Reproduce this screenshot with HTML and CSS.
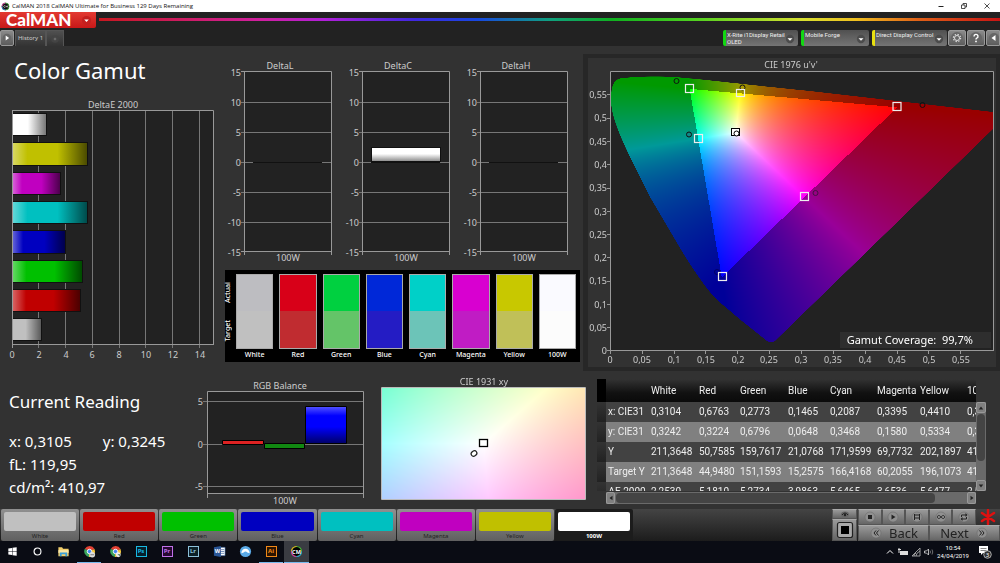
FILE: index.html
```html
<!DOCTYPE html>
<html lang="en">
<head>
<meta charset="utf-8">
<title>CalMAN 2018 CalMAN Ultimate for Business</title>
<link rel="stylesheet" href="styles.css">
</head>
<body>
<header class="titlebar">
  <svg class="app-icon" viewBox="0 0 10 10"><circle cx="5" cy="5" r="3.9" fill="#111" stroke="#4a4" stroke-width="1"/><path d="M1.1 5a3.9 3.9 0 0 1 3.9-3.9" stroke="#d3a" fill="none"/><path d="M1.1 5a3.9 3.9 0 0 0 3.9 3.9" stroke="#36c" fill="none"/><path d="M4.6 4.2a1 1 0 1 0 0 1.6M5.6 6V4.2l.8 1 .8-1V6" stroke="#fff" stroke-width=".6" fill="none"/></svg>
  <span class="window-title">CalMAN 2018 CalMAN Ultimate for Business 129 Days Remaining</span>
  <div class="window-buttons">
    <button aria-label="Minimize"><svg viewBox="0 0 10 10"><path d="M2.5 5.5h5" stroke="#222"/></svg></button>
    <button aria-label="Restore"><svg viewBox="0 0 10 10"><path d="M2.5 4h3.500v3.500h-3.500zM4 4V2.500h3.500V6H6" fill="none" stroke="#222" stroke-width=".8"/></svg></button>
    <button aria-label="Close"><svg viewBox="0 0 10 10"><path d="M2.500 2.500l5 5M7.500 2.500l-5 5" stroke="#222" stroke-width=".8"/></svg></button>
  </div>
</header>

<div class="brandbar">
  <button class="brand">CalMAN<svg viewBox="0 0 12 12"><circle cx="6" cy="6" r="5" fill="#c4201f"/><path d="M3.500 5h5L6 7.500z" fill="#fff"/></svg></button>
  <div class="rainbow"></div>
</div>

<nav class="toolbar">
  <button class="play" aria-label="Expand"><svg viewBox="0 0 14 14"><circle cx="7" cy="7" r="5" fill="#666"/><path d="M5.500 4v6l4-3z" fill="#fff"/></svg></button>
  <button class="tab">History 1</button>
  <button class="tab add" aria-label="Add tab"><svg viewBox="0 0 14 14"><circle cx="7" cy="7" r="4.500" fill="#444"/><path d="M7 5.500v3M5.500 7h3" stroke="#888" stroke-width=".8"/></svg></button>
  <div class="devices">
    <button class="device meter"><span>X-Rite i1Display Retail<br>OLED</span><svg viewBox="0 0 12 12"><circle cx="6" cy="6" r="5" fill="#4c4c4c"/><path d="M3 5h6L6 8z" fill="#fff"/></svg></button>
    <button class="device source"><span>Mobile Forge</span><svg viewBox="0 0 12 12"><circle cx="6" cy="6" r="5" fill="#4c4c4c"/><path d="M3 5h6L6 8z" fill="#fff"/></svg></button>
    <button class="device display"><span>Direct Display Control</span><svg viewBox="0 0 12 12"><circle cx="6" cy="6" r="5" fill="#4c4c4c"/><path d="M3 5h6L6 8z" fill="#fff"/></svg></button>
    <button class="tool" aria-label="Settings"><svg viewBox="0 0 14 14"><circle cx="7" cy="7" r="6" fill="#666"/><circle cx="7" cy="7" r="2.500" fill="none" stroke="#ddd" stroke-width="1"/><circle cx="7" cy="7" r="3.600" fill="none" stroke="#ddd" stroke-width="1.200" stroke-dasharray="1.400 1.430"/></svg></button>
    <button class="tool" aria-label="Help"><svg viewBox="0 0 14 14"><circle cx="7" cy="7" r="6" fill="#666"/><path d="M5 5.400a2 2 0 1 1 2.800 1.800Q7 7.600 7 8.500" fill="none" stroke="#fff" stroke-width="1.400"/><circle cx="7" cy="10.400" r=".9" fill="#fff"/></svg></button>
    <button class="tool edge" aria-label="Collapse"><svg viewBox="0 0 14 14"><circle cx="7" cy="7" r="5" fill="#666"/><path d="M8.500 4v6l-4-3z" fill="#fff"/></svg></button>
  </div>
</nav>

<main>
  <div class="row top">
    <section class="gamut">
      <h1>Color Gamut</h1>
      <svg class="chart" viewBox="0 98 220 267" role="img" aria-label="DeltaE 2000">
        <defs>
          <linearGradient id="shade"><stop offset="0" stop-color="#fff" stop-opacity=".4"/><stop offset=".2" stop-color="#fff" stop-opacity="0"/><stop offset=".6" stop-color="#000" stop-opacity="0"/><stop offset="1" stop-color="#000" stop-opacity=".62"/></linearGradient>
          <linearGradient id="soft"><stop offset=".45" stop-color="#000" stop-opacity="0"/><stop offset="1" stop-color="#000" stop-opacity=".55"/></linearGradient>
        </defs>
        <rect x="12" y="110" width="201" height="235" fill="#222"/>
        <path class="grid" d="M38.500 110V348M65.500 110V348M92.500 110V348M119.500 110V348M145.500 110V348M172.500 110V348M199.500 110V348"/>
        <path class="frame" d="M12.500 348V110.500H213.500V345M12 344.500H213.500"/>
        <g stroke="#111">
          <path d="M12.500 113.500h34v22h-34z" fill="#fff"/><path d="M12.500 113.500h34v22h-34z" fill="url(#soft)"/>
          <path d="M12.500 142.500h75v23h-75z" fill="#c0c000"/><path d="M12.500 142.500h75v23h-75z" fill="url(#shade)"/>
          <path d="M12.500 172.500h48v22h-48z" fill="#c000c0"/><path d="M12.500 172.500h48v22h-48z" fill="url(#shade)"/>
          <path d="M12.500 201.500h75v22h-75z" fill="#00c0c0"/><path d="M12.500 201.500h75v22h-75z" fill="url(#shade)"/>
          <path d="M12.500 230.500h53v23h-53z" fill="#0000c0"/><path d="M12.500 230.500h53v23h-53z" fill="url(#shade)"/>
          <path d="M12.500 260.500h70v22h-70z" fill="#00c000"/><path d="M12.500 260.500h70v22h-70z" fill="url(#shade)"/>
          <path d="M12.500 289.500h68v22h-68z" fill="#c00000"/><path d="M12.500 289.500h68v22h-68z" fill="url(#shade)"/>
          <path d="M12.500 318.500h29v22h-29z" fill="#c0c0c0"/><path d="M12.500 318.500h29v22h-29z" fill="url(#soft)"/>
        </g>
        <path class="frame" d="M12.500 110V348"/>
        <g class="label mid"><text x="113" y="108">DeltaE 2000</text>
          <text x="12" y="358">0</text><text x="39" y="358">2</text><text x="66" y="358">4</text><text x="92" y="358">6</text><text x="119" y="358">8</text><text x="146" y="358">10</text><text x="173" y="358">12</text><text x="200" y="358">14</text></g>
      </svg>
    </section>

    <section class="deltas">
      <svg class="chart" viewBox="220 46 363 224" role="img" aria-label="DeltaL, DeltaC and DeltaH">
        <defs>
          <linearGradient id="whitebar" x2="0" y2="1"><stop offset=".45" stop-color="#fff"/><stop offset="1" stop-color="#888"/></linearGradient>
          <g id="deltaplot">
            <rect x="245" y="72" width="87" height="180" fill="#222"/>
            <path class="grid" d="M241 102.500h90M241 132.500h90M241 162.500h90M241 192.500h90M241 222.500h90"/>
            <path class="frame" d="M241 71.500H331.500V255M244.500 71V255M241 251.500H331"/>
            <g class="label end"><text x="241" y="76">15</text><text x="241" y="106">10</text><text x="241" y="136">5</text><text x="241" y="166">0</text><text x="241" y="196">-5</text><text x="241" y="226">-10</text><text x="241" y="256">-15</text></g>
            <text class="label mid" x="288" y="261">100W</text>
            <path d="M253 162.500h69" stroke="#111"/>
          </g>
        </defs>
        <use href="#deltaplot"/><use href="#deltaplot" x="118"/><use href="#deltaplot" x="236"/>
        <rect x="371.500" y="147.500" width="69" height="14" fill="url(#whitebar)" stroke="#111"/>
        <g class="label mid"><text x="280" y="69">DeltaL</text><text x="398" y="69">DeltaC</text><text x="516" y="69">DeltaH</text></g>
      </svg>
      <div class="swatches">
        <div class="sides"><span>Actual</span><span>Target</span></div>
        <figure><div class="pair white"></div><figcaption>White</figcaption></figure>
        <figure><div class="pair red"></div><figcaption>Red</figcaption></figure>
        <figure><div class="pair green"></div><figcaption>Green</figcaption></figure>
        <figure><div class="pair blue"></div><figcaption>Blue</figcaption></figure>
        <figure><div class="pair cyan"></div><figcaption>Cyan</figcaption></figure>
        <figure><div class="pair magenta"></div><figcaption>Magenta</figcaption></figure>
        <figure><div class="pair yellow"></div><figcaption>Yellow</figcaption></figure>
        <figure><div class="pair full"></div><figcaption>100W</figcaption></figure>
      </div>
    </section>

    <section class="cie">
      <svg class="chart" viewBox="583 46 417 325" role="img" aria-label="CIE 1976 u'v'">
        <rect x="583" y="54" width="417" height="317" fill="#272727"/>
        <rect x="588" y="58" width="408" height="309" fill="#323232"/>
        <rect x="610" y="71" width="383" height="280" fill="#222"/>
        <foreignObject x="610" y="71" width="383" height="280"><canvas id="locus" class="field" width="1149" height="840"></canvas></foreignObject>
        <path class="frame" d="M610.500 354V71.500H993.500V351M607 350.500H993.500"/>
        <path class="frame" d="M607 94.500h3M607 118.500h3M607 141.500h3M607 164.500h3M607 188.500h3M607 211.500h3M607 234.500h3M607 257.500h3M607 281.500h3M607 304.500h3M607 327.500h3M642.500 351v3M674.500 351v3M705.500 351v3M737.500 351v3M769.500 351v3M801.500 351v3M833.500 351v3M865.500 351v3M897.500 351v3M928.500 351v3M960.500 351v3"/>
        <g fill="none" stroke="#111"><circle cx="676.500" cy="81" r="2.500"/><circle cx="742.500" cy="87.500" r="2.500" fill="#a90"/><circle cx="922.500" cy="105" r="2.500"/><circle cx="689" cy="134.500" r="2.500" fill="#188"/><circle cx="815.500" cy="193" r="2.500" stroke="#414"/><circle cx="717" cy="272" r="2.500" stroke="#006"/></g>
        <g fill="none" stroke="#eee" stroke-width="1.200"><rect x="685.500" y="84.500" width="8" height="8"/><rect x="736.500" y="89.500" width="8" height="7"/><rect x="893" y="102.500" width="8" height="8"/><rect x="694.500" y="134.500" width="8" height="8"/><rect x="800.500" y="192.500" width="8" height="8"/><rect x="718.500" y="272.500" width="8" height="8"/></g>
        <rect x="731.500" y="128.500" width="8" height="7" fill="#fff" stroke="#000"/><circle cx="736.500" cy="133.500" r="2.500" fill="#fff" stroke="#000"/>
        <rect x="840" y="332" width="151" height="16" fill="#2e2e2e"/>
        <text class="coverage" x="973" y="344">Gamut Coverage:&#160; 99,7%</text>
        <text class="label mid" x="791" y="68">CIE 1976 u'v'</text>
        <g class="label end"><text x="607" y="98">0,55</text><text x="607" y="121">0,5</text><text x="607" y="145">0,45</text><text x="607" y="168">0,4</text><text x="607" y="191">0,35</text><text x="607" y="215">0,3</text><text x="607" y="238">0,25</text><text x="607" y="261">0,2</text><text x="607" y="284">0,15</text><text x="607" y="308">0,1</text><text x="607" y="331">0,05</text><text x="607" y="354">0</text></g>
        <g class="label mid"><text x="610" y="363">0</text><text x="642" y="363">0,05</text><text x="674" y="363">0,1</text><text x="706" y="363">0,15</text><text x="738" y="363">0,2</text><text x="769" y="363">0,25</text><text x="801" y="363">0,3</text><text x="833" y="363">0,35</text><text x="865" y="363">0,4</text><text x="897" y="363">0,45</text><text x="929" y="363">0,5</text><text x="961" y="363">0,55</text></g>
      </svg>
    </section>
  </div>

  <div class="row bottom">
    <section class="reading">
      <h2>Current Reading</h2>
      <div class="xy"><span>x: 0,3105</span><span>y: 0,3245</span></div>
      <div>fL: 119,95</div>
      <div>cd/m²: 410,97</div>
    </section>
    <section>
      <svg class="chart" viewBox="190 371 182 138" role="img" aria-label="RGB Balance">
        <defs><linearGradient id="bluebar" x2="0" y2="1"><stop offset="0" stop-color="#55f"/><stop offset=".25" stop-color="#00f"/><stop offset=".55" stop-color="#00f"/><stop offset="1" stop-color="#006"/></linearGradient></defs>
        <rect x="207" y="392" width="157" height="102" fill="#222"/>
        <path class="grid" d="M203 401.500h160M203 444.500h160M203 486.500h160"/>
        <path class="frame" d="M207.500 498V391.500H363.500V498M207 493.500H363"/>
        <g stroke="#000"><path d="M222.500 440.500h41v4h-41z" fill="#d22"/><path d="M264.500 443.500h40v5h-40z" fill="#181"/><path d="M305.500 406.500h41v37h-41z" fill="url(#bluebar)"/></g>
        <g class="label mid"><text x="280" y="389">RGB Balance</text><text x="285" y="504">100W</text></g>
        <g class="label end"><text x="203" y="405">5</text><text x="203" y="448">0</text><text x="203" y="490">-5</text></g>
      </svg>
    </section>
    <section>
      <svg class="chart" viewBox="372 371 218 138" role="img" aria-label="CIE 1931 xy">
        <foreignObject x="382" y="388" width="203" height="111"><canvas id="white-zone" class="field" width="203" height="111"></canvas></foreignObject>
        <path d="M381.500 387.500h204v112h-204z" fill="none" stroke="#bbb"/>
        <rect x="479.500" y="439.500" width="8" height="7" fill="#fff" stroke="#000" stroke-width="1.300"/>
        <ellipse cx="474" cy="453.500" rx="3" ry="2.500" fill="#fff" stroke="#222" stroke-width="1.200" transform="rotate(-35 474 453.500)"/>
        <text class="label mid" x="484" y="385">CIE 1931 xy</text>
      </svg>
    </section>
    <section class="data">
      <div class="data-view">
        <table>
          <thead><tr><td class="gutter"></td><th></th><th>White</th><th>Red</th><th>Green</th><th>Blue</th><th>Cyan</th><th>Magenta</th><th>Yellow</th><th>100W</th></tr></thead>
          <tbody>
            <tr><td class="gutter"></td><th>x: CIE31</th><td>0,3104</td><td>0,6763</td><td>0,2773</td><td>0,1465</td><td>0,2087</td><td>0,3395</td><td>0,4410</td><td>0,3105</td></tr>
            <tr><td class="gutter"></td><th>y: CIE31</th><td>0,3242</td><td>0,3224</td><td>0,6796</td><td>0,0648</td><td>0,3468</td><td>0,1580</td><td>0,5334</td><td>0,3245</td></tr>
            <tr><td class="gutter"></td><th>Y</th><td>211,3648</td><td>50,7585</td><td>159,7617</td><td>21,0768</td><td>171,9599</td><td>69,7732</td><td>202,1897</td><td>410,9700</td></tr>
            <tr><td class="gutter"></td><th>Target Y</th><td>211,3648</td><td>44,9480</td><td>151,1593</td><td>15,2575</td><td>166,4168</td><td>60,2055</td><td>196,1073</td><td>410,9700</td></tr>
            <tr><td class="gutter"></td><th>ΔE 2000</th><td>2,2530</td><td>5,1810</td><td>5,2734</td><td>3,9863</td><td>5,6465</td><td>3,6536</td><td>5,6477</td><td>2,5000</td></tr>
          </tbody>
        </table>
      </div>
      <div class="scroll vertical"><button aria-label="Scroll up"><svg viewBox="0 0 8 8"><path d="M1 6l3-4 3 4z"/></svg></button><div class="track"><div class="thumb"></div></div><button aria-label="Scroll down"><svg viewBox="0 0 8 8"><path d="M1 2l3 4 3-4z"/></svg></button></div>
      <div class="scroll horizontal"><button aria-label="Scroll left"><svg viewBox="0 0 8 8"><path d="M6 1L2 4l4 3z"/></svg></button><div class="track"><div class="thumb"></div></div><button aria-label="Scroll right"><svg viewBox="0 0 8 8"><path d="M2 1l4 3-4 3z"/></svg></button></div>
    </section>
  </div>
</main>

<div class="patternbar">
  <div class="patterns">
    <button><i class="p-white"></i>White</button>
    <button><i class="p-red"></i>Red</button>
    <button><i class="p-green"></i>Green</button>
    <button><i class="p-blue"></i>Blue</button>
    <button><i class="p-cyan"></i>Cyan</button>
    <button><i class="p-magenta"></i>Magenta</button>
    <button><i class="p-yellow"></i>Yellow</button>
    <button class="current"><i class="p-full"></i>100W</button>
  </div>
  <div class="controls">
    <div class="window-controls">
      <button class="eye" aria-label="Show pattern window"><svg viewBox="0 0 14 8"><ellipse cx="7" cy="4.500" rx="4" ry="3" fill="#666"/><path d="M4 5q3-4 6 0" fill="none" stroke="#222"/><circle cx="7" cy="5" r="1.200" fill="#222"/></svg></button>
      <button class="pattern" aria-label="Pattern"><svg viewBox="0 0 18 18"><rect x="1.500" y="1.500" width="15" height="15" rx="2" fill="#aaa" stroke="#222" stroke-width="1.200"/><path d="M5 5h8v8H5z"/></svg></button>
    </div>
    <div class="actions">
      <div class="reads">
        <button aria-label="Stop"><svg viewBox="0 0 14 14"><circle class="disc" cx="7" cy="7" r="5"/><path d="M5 5h4v4H5z" fill="#222"/></svg></button>
        <button aria-label="Read"><svg viewBox="0 0 14 14"><circle class="disc" cx="7" cy="7" r="5"/><path d="M5.500 4.500l4 2.500-4 2.500z" fill="#222"/></svg></button>
        <button aria-label="Read series"><svg viewBox="0 0 14 14"><circle class="disc" cx="7" cy="7" r="5"/><path class="line" d="M4.500 4v6M9.500 4v6M4.500 5h5M4.500 8h5"/></svg></button>
        <button aria-label="Read continuously"><svg viewBox="0 0 14 14"><circle class="disc" cx="7" cy="7" r="5"/><path class="line" d="M7 7C5.500 5 3.500 5 3.500 7S5.500 9 7 7s3.500-2 3.500 0S8.500 9 7 7z"/></svg></button>
        <button aria-label="Repeat"><svg viewBox="0 0 14 14"><circle class="disc" cx="7" cy="7" r="5"/><path class="line" d="M4.500 7V5H9M9.500 7v2H5"/><path d="M8.500 3l2 2-2 2zM5.500 7l-2 2 2 2z" fill="#222"/></svg></button>
        <svg class="star" viewBox="0 0 16 16"><path d="M8 1v14M2 4l12 8M2 12l12-8" stroke="#e01010" stroke-width="2.500" stroke-linecap="round"/></svg>
      </div>
      <div class="steps">
        <button><svg viewBox="0 0 14 14"><circle class="disc" cx="7" cy="7" r="5"/><path class="line" d="M7 4.500L5 7l2 2.500M9.500 4.500L7.500 7l2 2.500"/></svg>Back</button>
        <button>Next<svg viewBox="0 0 14 14"><circle class="disc" cx="7" cy="7" r="5"/><path class="line" d="M4.500 4.500l2 2.500-2 2.500M7 4.500L9 7 7 9.500"/></svg></button>
      </div>
    </div>
  </div>
</div>

<footer class="taskbar">
  <button aria-label="Start"><svg viewBox="0 0 14 14"><path d="M2.500 3.700l4-.6v3.600h-4zM7 3l4.500-.7v4.400H7zM2.500 7.300h4v3.600l-4-.6zM7 7.300h4.500v4.400L7 11z" fill="#fff"/></svg></button>
  <button aria-label="Cortana"><svg viewBox="0 0 14 14"><circle cx="7" cy="7" r="3.700" fill="none" stroke="#fff" stroke-width="1.200"/></svg></button>
  <button aria-label="File Explorer"><svg viewBox="0 0 14 14"><path d="M1.500 2.500h4l1 1.500h6v8h-11z" fill="#f3cf6c"/><path d="M1.500 5.500h11v3h-11z" fill="#fbe8a6"/><path d="M3 8h8v4H9V10H5v2H3z" fill="#3ba0d8"/></svg></button>
  <button class="open" aria-label="Chrome"><svg viewBox="0 0 14 14"><path d="M7 7L2 4a6 6 0 0 1 10.400.3z" fill="#e34234"/><path d="M7 7L2 4a6 6 0 0 0 4.400 8.800z" fill="#3ba55c"/><path d="M7 7l5.400-2.700a6 6 0 0 1-6 8.500z" fill="#f7c83a"/><circle cx="7" cy="7" r="2.400" fill="#4285f4" stroke="#fff"/><circle cx="10" cy="10.500" r="3" fill="#ddd"/><path d="M8 10.500h4" stroke="#777"/></svg></button>
  <button aria-label="Chrome second profile"><svg viewBox="0 0 14 14"><path d="M7 7L2 4a6 6 0 0 1 10.400.3z" fill="#e34234"/><path d="M7 7L2 4a6 6 0 0 0 4.400 8.800z" fill="#3ba55c"/><path d="M7 7l5.400-2.700a6 6 0 0 1-6 8.500z" fill="#f7c83a"/><circle cx="7" cy="7" r="2.400" fill="#4285f4" stroke="#fff"/><circle cx="10" cy="10.500" r="2.600" fill="#eee"/><path d="M9 10h3v2z" fill="#475"/></svg></button>
  <button><b class="tile ps">Ps</b></button>
  <button><b class="tile pr">Pr</b></button>
  <button><b class="tile lr">Lr</b></button>
  <button><svg viewBox="0 0 14 14"><path d="M7 2.500h6v9H7z" fill="#fff" stroke="#2b5797" stroke-width=".6"/><path d="M8 5h4M8 7h4M8 9h4" stroke="#2b5797" stroke-width=".7"/><path d="M1 2.500L8.500 1v12L1 11.500z" fill="#2b5797"/><text class="word" x="4.800" y="9">W</text></svg></button>
  <button aria-label="Browser"><svg viewBox="0 0 14 14"><circle cx="7" cy="7" r="6" fill="#5aa9e6"/><path d="M2.500 9q.5-5 4.500-5t4.500 5L9 8Q7 6 5 8z" fill="#fff"/></svg></button>
  <button class="open"><b class="tile ai">Ai</b></button>
  <button class="open active"><svg viewBox="0 0 14 14"><circle cx="7" cy="7" r="5.400" fill="#000" stroke="#4b3" stroke-width="1.200"/><path d="M1.600 7A5.400 5.400 0 0 1 7 1.600" fill="none" stroke="#e5a020" stroke-width="1.200"/><path d="M1.600 7A5.400 5.400 0 0 0 7 12.400" fill="none" stroke="#d2a" stroke-width="1.200"/><path d="M7 12.400A5.400 5.400 0 0 0 12.400 7" fill="none" stroke="#29d" stroke-width="1.200"/><text class="cm" x="7" y="9.200">CM</text></svg></button>
  <div class="tray">
    <svg viewBox="0 0 12 12"><path d="M3 7.500l3-3 3 3" fill="none" stroke="#fff"/></svg>
    <svg viewBox="0 0 12 12"><path d="M3 5h8v4H3z" fill="#ddd"/><path d="M1 3.500h3M2 2v5" stroke="#ddd"/></svg>
    <svg viewBox="0 0 12 12"><path d="M2 10L10 2v8zM4 10q0-2 2-3M6 10q0-3 4-5" fill="none" stroke="#aaa" stroke-width=".9"/></svg>
    <svg viewBox="0 0 12 12"><path d="M1.500 5h2l2-2v6l-2-2h-2z" fill="none" stroke="#ddd" stroke-width=".8"/><path d="M7 4.500q1 1.500 0 3M9 3.500q1.500 2.500 0 5" fill="none" stroke="#888" stroke-width=".8"/></svg>
    <time>10:54<br>24/04/2019</time>
    <svg class="notice" viewBox="0 0 16 16"><path d="M2 2h9v7H6L4 11V9H2z" fill="#fff"/><path d="M3.500 4.500h6M3.500 6.500h6" stroke="#555" stroke-width=".7"/><circle cx="10.500" cy="10.500" r="3.800" fill="#333" stroke="#ccc" stroke-width=".8"/><text class="count" x="10.500" y="12.600">3</text></svg>
  </div>
</footer>
<script src="fields.js"></script>
</body>
</html>
```
FILE: styles.css
```css
* { box-sizing: border-box; }
body {
  margin: 0;
  min-height: 100vh;
  display: flex;
  flex-direction: column;
  background: #323232;
  color: #fff;
  font-family: "Noto Sans", "Open Sans", sans-serif;
  font-size: 9px;
}
button { font: inherit; color: inherit; border: 0; padding: 0; margin: 0; background: none; }
svg { display: block; flex: none; }

.titlebar { display: flex; align-items: center; height: 12px; padding-left: 1px; background: #fff; color: #111; font-family: "Open Sans", sans-serif; font-size: 6px; line-height: 12px; }
.app-icon { width: 9px; height: 9px; margin-right: 2px; }
.window-buttons { display: flex; gap: 13px; margin-left: auto; padding-right: 8px; }
.window-buttons svg { width: 10px; height: 10px; }

.brandbar { display: flex; height: 17px; background: #222; }
.brand { display: flex; align-items: center; justify-content: space-between; width: 96px; height: 16px; padding: 0 4px 0 6px; background: linear-gradient(#e33a32, #c81818); border-radius: 0 0 2px 0; font-family: Lato, sans-serif; font-size: 17px; font-weight: 900; line-height: 14px; }
.brand svg { width: 11px; height: 11px; }
.rainbow { flex: 1; height: 3px; margin: 6px 0 0 3px; background: linear-gradient(90deg, #c81820, #d020a0 18%, #b020d8 25%, #4028e0 35%, #1848e0 42%, #10a080 50%, #10b020 57%, #50d020 66%, #d8e030 78%, #f0c020 84%, #e06018 91%, #c81414); }

.toolbar { display: flex; align-items: flex-end; height: 17px; background: #222; font-size: 6px; line-height: 7px; }
.play, .tool { display: grid; place-items: center; height: 16px; background: linear-gradient(#8a8a8a, #5c5c5c); border: 1px solid #999; border-radius: 2px; }
.play { width: 14px; margin-right: 1px; }
.play svg { width: 12px; height: 12px; }
.tab { width: 31px; height: 16px; color: #ccc; background: linear-gradient(#505050, #333); border: 1px solid #555; border-bottom: 0; white-space: nowrap; }
.add { display: grid; place-items: center; width: 18px; }
.add svg { width: 12px; height: 12px; }
.devices { display: flex; gap: 1px; margin-left: auto; }
.device { display: flex; justify-content: space-between; align-items: flex-start; width: 75px; height: 16px; margin-right: 2px; padding: 1px 3px 0 1px; text-align: left; color: #eee; white-space: nowrap; background: linear-gradient(#505050, #757575); border-left: 3px solid #12d812; border-radius: 2px; font-family: Roboto, sans-serif; }
.device svg { width: 10px; height: 10px; margin: 3px 0 0 -6px; }
.source { width: 68px; }
.display { width: 75px; margin-right: 0; border-left-color: #e8e010; }
.tool { width: 18px; }
.tool svg { width: 14px; height: 14px; }
.edge { width: 14px; border-radius: 2px 0 0 2px; }

main { flex: 1; background: #323232; }
.row { display: grid; align-items: start; }
.top { grid-template-columns: 220fr 363fr 417fr; }
.bottom { grid-template-columns: 190fr 182fr 218fr 410fr; }
.chart { width: 100%; height: auto; }
h1, h2 { margin: 0; font-weight: 400; }
h1 { padding: 8px 0 12px 14px; font-size: 22px; line-height: 32px; }
.label { fill: #ccc; font-size: 9px; }
.mid { text-anchor: middle; }
.end { text-anchor: end; }
.coverage { fill: #fff; font-size: 11px; text-anchor: end; }
.grid { fill: none; stroke: #777; }
.frame { fill: none; stroke: #999; }
.field { display: block; width: 100%; height: 100%; }

.swatches { display: grid; grid-template-columns: 4px repeat(8, 1fr); gap: 6px; margin: 0 3px 9px 5px; padding: 4px 4px 2px 1px; background: #000; }
.sides { display: flex; flex-direction: column; justify-content: space-around; align-items: center; height: 75px; font-size: 7px; line-height: 8px; font-weight: 500; }
.sides span { writing-mode: vertical-rl; transform: rotate(180deg); }
figure { margin: 0; min-width: 0; }
.pair { height: 75px; border: 1px solid #aaa; }
figcaption { display: flex; justify-content: center; font-size: 7px; line-height: 11px; font-weight: 500; white-space: nowrap; }
.white { background: linear-gradient(#bdbdc1 50%, #c0c0c0 50%); }
.red { background: linear-gradient(#d80018 50%, #c02c30 50%); }
.green { background: linear-gradient(#00d040 50%, #64c468 50%); }
.blue { background: linear-gradient(#0028d8 50%, #241cc4 50%); }
.cyan { background: linear-gradient(#00d0c8 50%, #6cc4b8 50%); }
.magenta { background: linear-gradient(#d800d0 50%, #c01cc4 50%); }
.yellow { background: linear-gradient(#c8c800 50%, #c0c058 50%); }
.full { background: linear-gradient(#fafaff 50%, #fcfcfc 50%); }

.reading { padding: 17px 0 0 9px; font-size: 15px; line-height: 23px; white-space: nowrap; }
h2 { padding-bottom: 14px; font-size: 17px; line-height: 28px; }
.xy { display: flex; gap: 31px; }

.data { display: grid; grid-template-columns: minmax(0, 1fr) 10px; gap: 1px 0; padding: 8px 14px 4px 7px; }
.data-view { height: 112px; overflow: hidden; }
table { width: 411px; table-layout: fixed; border-collapse: collapse; font-family: Roboto, "Noto Sans", sans-serif; font-size: 10px; color: #eee; }
table th, table td { height: 20px; padding: 0 0 0 2px; text-align: left; font-weight: 400; line-height: 20px; white-space: nowrap; }
thead th { height: 23px; background: linear-gradient(#333, #111 60%, #0a0a0a); }
thead .gutter { background: #000; }
tr > :nth-child(1) { width: 9px; }
tr > :nth-child(2) { width: 43px; }
tr > :nth-child(3) { width: 48px; }
tr > :nth-child(4) { width: 41px; }
tr > :nth-child(5) { width: 48px; }
tr > :nth-child(6) { width: 42px; }
tr > :nth-child(7) { width: 47px; }
tr > :nth-child(8) { width: 43px; }
tr > :nth-child(9) { width: 47px; }
tbody tr { background: #424242; }
tbody tr:nth-child(even) { background: #808080; }
tbody .gutter { background: linear-gradient(#333, #222); }
.scroll { display: flex; background: #6a6a6a; }
.scroll button { display: grid; place-items: center; background: #808080; border: 1px solid #999; border-radius: 2px; }
.scroll svg { width: 6px; height: 6px; fill: #222; }
.track { flex: 1; min-width: 0; }
.thumb { background: #444; border-radius: 4px; }
.vertical { flex-direction: column; margin-top: 23px; }
.vertical button { height: 11px; }
.vertical .thumb { height: 72%; }
.vertical .track { padding: 1px; }
.horizontal { height: 12px; margin-left: 9px; }
.horizontal button { width: 9px; }
.horizontal .track { padding: 1px; }
.horizontal .thumb { width: 91%; height: 10px; }

.patternbar { display: flex; justify-content: space-between; height: 32px; background: linear-gradient(#444, #1c1c1c); }
.patterns { display: grid; grid-template-columns: repeat(8, 1fr); gap: 1px; flex: 0 1 633px; padding-left: 1px; }
.patterns button { display: flex; flex-direction: column; height: 32px; padding: 3px 3px 0; color: #222; font-size: 6px; line-height: 9px; text-align: center; align-items: stretch; background: linear-gradient(#909090, #606060); border-radius: 2px; }
.patterns .current { color: #fff; font-weight: 700; background: #1c1c1c; }
.patterns i { height: 19px; margin-bottom: 1px; border-radius: 2px; }
.p-white { background: #c0c0c0; }
.p-red { background: #c00000; }
.p-green { background: #00c000; }
.p-blue { background: #0000c0; }
.p-cyan { background: #00c0c0; }
.p-magenta { background: #c000c0; }
.p-yellow { background: #c0c000; }
.p-full { background: #fff; }

.controls { display: flex; flex: 0 0 168px; gap: 1px; }
.controls button { display: flex; align-items: center; justify-content: center; background: linear-gradient(#999, #666); border: 1px solid #555; border-top-color: #aaa; }
.window-controls { display: flex; flex-direction: column; width: 25px; }
.controls .eye { height: 10px; }
.eye svg { width: 14px; height: 8px; }
.controls .pattern { height: 22px; }
.pattern svg { width: 18px; height: 18px; }
.actions { flex: 1; }
.reads { display: grid; grid-template-columns: repeat(5, 1fr) 24px; height: 16px; }
.reads svg, .steps svg { width: 14px; height: 14px; }
.disc { fill: #909090; stroke: #666; stroke-width: .5; }
.line { fill: none; stroke: #222; }
.reads .star { width: 16px; height: 16px; margin-left: 4px; }
.steps { display: grid; grid-template-columns: 1fr 1fr; height: 16px; color: #222; font-size: 13px; line-height: 14px; }
.steps button { gap: 6px; }

.taskbar { display: flex; height: 22px; background: #0a0c14; }
.taskbar > button { display: grid; place-items: center; width: 24px; margin-right: 2px; border-bottom: 1px solid transparent; }
.taskbar > button:first-child { margin-right: 1px; }
.taskbar > button svg { width: 13px; height: 13px; }
.taskbar .open { border-bottom-color: #76b9ed; }
.taskbar .active { width: 25px; margin-left: -1px; background: #3a3c42; }
.tile { width: 11px; height: 11px; border: 1px solid; font-size: 6px; line-height: 9px; font-weight: 700; text-align: center; }
.ps { color: #18b8e0; background: #06202c; }
.pr { color: #c070e8; background: #260832; }
.lr { color: #8cc0d8; background: #0c2028; }
.ai { color: #f08818; background: #2c1400; }
.word { fill: #fff; font-size: 6px; font-weight: 700; text-anchor: middle; }
.cm { fill: #fff; font-size: 6px; font-weight: 700; text-anchor: middle; }
.tray { display: flex; align-items: center; gap: 1px; margin-left: auto; padding-right: 7px; }
.tray svg { width: 12px; height: 12px; }
.tray time { font-family: Roboto, sans-serif; font-size: 6px; line-height: 8px; text-align: center; margin: 0 7px 0 1px; }
.tray .notice { width: 16px; height: 16px; }
.count { fill: #fff; font-size: 6px; text-anchor: middle; }
```
FILE: fields.js
```js
// Full-brightness colour of a chromaticity, negatives clipped.
function chroma(x, y, exponent) {
  const X = x / y, Z = (1 - x - y) / y;
  const rgb = [
    3.2406 * X - 1.5372 - 0.4986 * Z,
    -0.9689 * X + 1.8758 + 0.0415 * Z,
    0.0557 * X - 0.2040 + 1.0570 * Z
  ];
  const inside = Math.min(...rgb) >= 0;
  const clipped = rgb.map(c => Math.max(0, c));
  const peak = Math.max(...clipped);
  return { inside, rgb: clipped.map(c => 255 * Math.pow(c / peak, exponent)) };
}

function paint(width, height, colorAt) {
  const canvas = document.createElement("canvas");
  canvas.width = width;
  canvas.height = height;
  const ctx = canvas.getContext("2d");
  const image = ctx.createImageData(width, height);
  for (let j = 0; j < height; j++) {
    for (let i = 0; i < width; i++) {
      const c = colorAt((i + 0.5) / width, (j + 0.5) / height);
      const k = 4 * (j * width + i);
      image.data[k] = c[0];
      image.data[k + 1] = c[1];
      image.data[k + 2] = c[2];
      image.data[k + 3] = 255;
    }
  }
  ctx.putImageData(image, 0, 0);
  return canvas;
}

// CIE 1976 u'v' diagram, dimmed outside the target triangle.
const locus = document.getElementById("locus");
const lctx = locus.getContext("2d");
const outline = new Path2D("M1 29C1 14 4 7 14 7C30 5 60 5 75 7C100 9 130 13 200 20L383 41V58L167 268Q163 273 157 270L137 254C128 247 118 238 113 234Q103 226 93 212Q80 194 70 177L40 126Q29 104 20 86Q10 65 7 56Q1 40 1 29Z");
const field = paint(locus.width, locus.height, (s, t) => {
  const u = s * 383 / 637, v = (280 - t * 280) / 466;
  const d = 6 * u - 16 * v + 12;
  const c = chroma(9 * u / d, Math.max(4 * v / d, 0.001), 0.85);
  return c.inside ? c.rgb : c.rgb.map(n => n * 0.6);
});
lctx.scale(3, 3);
lctx.clip(outline);
lctx.drawImage(field, 0, 0, 383, 280);

// CIE 1931 xy diagram around the white point.
const zone = document.getElementById("white-zone");
zone.getContext("2d").drawImage(
  paint(zone.width, zone.height, (s, t) => chroma(0.2627 + 0.1 * s, 0.381 - 0.104 * t, 1 / 2.2).rgb), 0, 0);
```
